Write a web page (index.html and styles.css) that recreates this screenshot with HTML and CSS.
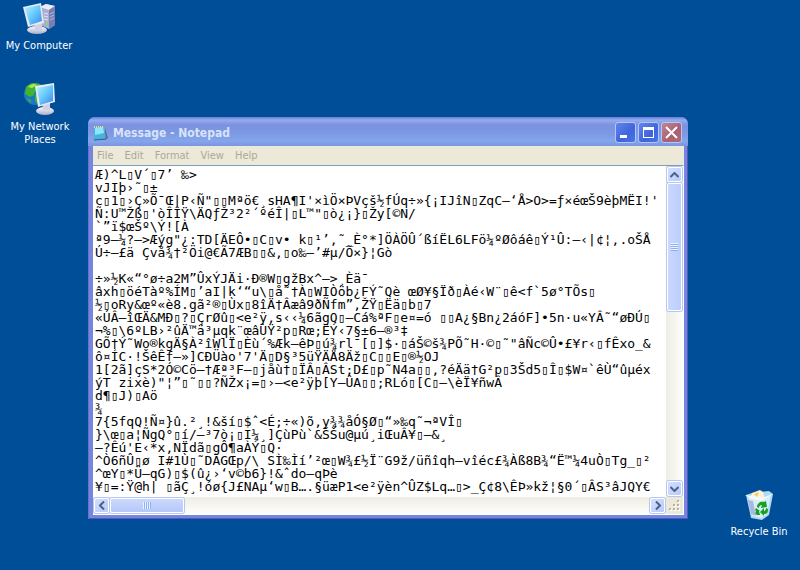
FILE: index.html
```
<!DOCTYPE html>
<html lang="en">
<head>
    <meta charset="UTF-8">
    <meta name="viewport" content="width=device-width, initial-scale=1.0">
    <title>Desktop</title>
    <link rel="stylesheet" href="styles.css">
</head>
<body>
    <!-- Desktop icons -->
    <a href="#computer" class="icon computer">
        <svg width="34" height="32" viewBox="0 0 34 32">
            <defs>
                <linearGradient id="screen" x1="0" y1="0" x2="1" y2="1">
                    <stop offset="0" stop-color="#b4f3ff"/>
                    <stop offset="0.5" stop-color="#66c8fa"/>
                    <stop offset="1" stop-color="#3f86ec"/>
                </linearGradient>
                <linearGradient id="base" x1="0" y1="0" x2="0" y2="1">
                    <stop offset="0" stop-color="#fff"/>
                    <stop offset="1" stop-color="#a9abc9"/>
                </linearGradient>
            </defs>
            <path d="M18 4l6-3 9 2v19l-6 4-9-4z" fill="#aaaed0"/>
            <path d="M18 4l6-3 9 2-6 4z" fill="#e9ebf8"/>
            <path d="M27 7l6-4v19l-6 4z" fill="#777eb0"/>
            <path d="M22 10l4 1M22 13l4 1M22 16l4 1" stroke="#e4e6f6"/>
            <path d="M28 11l4-2M28 14l4-2M28 17l4-2" stroke="#b4b9dc"/>
            <path d="M24 20l2 1v2l-2-1z" fill="#7cdc62"/>
            <ellipse cx="15" cy="27" rx="10" ry="4" fill="url(#base)"/>
            <path d="M12 20l8-1v8h-7z" fill="#cfd1e4"/>
            <path d="M1 4l18-4 3 20-16 4z" fill="#e8e9f2"/>
            <path d="M3 5l15-3 2 16-12 4z" fill="url(#screen)"/>
        </svg>
        <span>My Computer</span>
    </a>
    <a href="#network" class="icon network">
        <svg width="34" height="34" viewBox="0 0 34 34">
            <circle cx="12" cy="12" r="11" fill="#1878c8"/>
            <path d="M3 5c4-5 11-5 15-2l-3 5-3 1-1 4-4 2-5-3zM12 13l5-1 2 4-4 6-3-3zM3 16l5 2v3z" fill="#43b52c"/>
            <path d="M5 5c3-3 6-4 9-2l-5 3z" fill="#a9e75c"/>
            <ellipse cx="22" cy="29" rx="9" ry="4" fill="url(#base)"/>
            <path d="M19 21l8-1v8h-7z" fill="#cfd1e4"/>
            <path d="M12 4l19-3 1 19-17 5z" fill="#e8e9f2"/>
            <path d="M14 6l16-3v16l-13 4z" fill="url(#screen)"/>
        </svg>
        <span>My Network Places</span>
    </a>
    <a href="#recycle" class="icon recycle">
        <svg width="30" height="32" viewBox="0 0 30 32">
            <path d="M2 6l6-2 17-2 4 3-4 21-7 5-11-2z" fill="#b3d9f2"/>
            <path d="M4 7l14 4 9-6-4 20-6 4-9-2z" fill="#d9eefb"/>
            <path d="M8 4l8-3 3 2 2 7-9 1-5-3z" fill="#fff3d4"/>
            <path d="M10 5l5-2-2 5z" fill="#f4c76d"/>
            <path d="M1 6l5 3 11 3 12-7-11 4-9-2z" fill="#f4fbff"/>
            <path d="M4 11l3 14 5 2-3-15z" fill="#a6badf"/>
            <path d="M13 18c0-4 4-6 7-5l2-1 1 6-6 1 1-3c-2 0-3 1-3 3z" fill="#18a020"/>
            <path d="M22 19l2 1c0 4-1 5-4 5v2l-4-4 4-4v3c1 0 2-1 2-3z" fill="#18a020"/>
            <path d="M12 19l4 3h-1l1 4h-3c-2-1-2-2-1-4l-1-1z" fill="#18a020"/>
        </svg>
        <span>Recycle Bin</span>
    </a>

    <!-- Notepad -->
    <div class="window">
        <div class="titlebar">
            <svg class="app-icon" width="16" height="16" viewBox="0 0 16 16">
                <path d="M12 3l3 10-3 2z" fill="#5a6d78"/>
                <path d="M1 2l10-1 2 13-12 1z" fill="#47b2df"/>
                <path d="M2 3l8-1 1 6-9 2z" fill="#8ee6f5"/>
                <path d="M1 15l12-1" stroke="#2d5a88"/>
                <path d="M1 2h10" stroke="#e8d9a0" stroke-width="2" stroke-dasharray="1 1"/>
            </svg>
            <h1>Message - Notepad</h1>
            <button class="control" aria-label="Minimize">
                <svg width="19" height="19" viewBox="0 0 19 19"><path d="M4 12h7v3H4z" fill="#fff"/></svg>
            </button>
            <button class="control" aria-label="Maximize">
                <svg width="19" height="19" viewBox="0 0 19 19"><path d="M4 4h11v11H4zM5 7v7h9V7z" fill="#fff" fill-rule="evenodd"/></svg>
            </button>
            <button class="control close" aria-label="Close">
                <svg width="19" height="19" viewBox="0 0 19 19"><path d="M4 4l11 11M15 4L4 15" stroke="#fff" stroke-width="2"/></svg>
            </button>
        </div>
        <div class="menubar">
            <button>File</button>
            <button>Edit</button>
            <button>Format</button>
            <button>View</button>
            <button>Help</button>
        </div>
        <div class="editor">
            <textarea aria-label="Message" wrap="off" spellcheck="false">Æ)^L▯V´▯7’ ‰>
vJIþ›˜▯±
c▯1▯›Ç»Õ¯Œ|P‹Ñ"▯▯Mªö€¸sHA¶I'×ìÖ×ÞVçš½fÚq÷»{¡IJîN▯ZqC–‘Å&gt;O&gt;=ƒ×éœŠ9èþMËI!'
Ñ:U™Žß▯'òÎÎŸ\ÄQƒŽ³2²´ºéÎ|▯L™"▯ò¿¡}▯Žy[©N/
`”ï$œŠº\Ý![À
ª9–¼?–>Æýg"¿:TD[ÄEÔ•▯C▯v• k▯¹’,˜_È°*]ÖÀÖÛ´ßíËL6LFö¼ºØôáê▯Ý¹Û:–‹|¢¦,.oŠÅ
Ú÷–£ä Çvå¾†²Öi@€Ã7ÆB▯▯&amp;,▯o‰–’#µ/Õ×}¦Gò

÷»½K«“°ø÷a2M”ÛxÝJÄi·Ð®W▯gžBx^–>¸Èä¯
âxh▯öéTàº%ÍM▯’aI|k‘“u\▯å˜†À▯WIÒöb¿FÝ˜Qè œØ¥§Ïð▯Àé‹W¨▯ê&lt;f`5ø°TÕs▯
½▯oRy&amp;œº«è8.gã²®▯Ùx▯8îÄ†Âæâ9ðÑfm”,ŽŸ▯Ëä▯b▯7
«ÚÂ—îŒÄ&amp;MÐ▯?▯ÇrØû▯&lt;e²ÿ,s‹‹¼6ãgQ▯–Cá%ªF▯e¤=ó ▯▯A¿§Bn¿2áóF]•5n·u«YÂ˜“øÐÚ▯
¬%▯\6ºLB›²ûÄ™ä³µqk¨œâÙŸ²p▯Rœ;ËÝ‹7§±6—®³‡
GÕ†Ý˜Wo®kgÄ§À²îWlÏ▯Èù´%Æk–êÞ▯ú¾rl¯[▯]$·▯áŠ©š¾PÕ˜H·©▯˜"âÑc©Û•£¥r‹▯fÊxo_&amp;
ô¤ÍC·!ŠêÊf–»]CÐÜào'7'Ä▯D§³5üŸÄÅ8Äž▯C▯▯E▯®½OJ
1[2ã]çS*2Ó©Cö–†Æª³F–▯jåù†▯ÏÂ▯ÂSt;D£▯p˜N4a▯▯,?éÄä†G²p▯3Šd5▯Î▯$W¤`êÙ“ûµéx
ýT zixè)"¦”▯˜▯▯?ÑŽx¡=▯›–&lt;e²ÿþ[Y–ÛA▯▯;RLó▯[C▯–\èÏ¥ñwÂ
d¶▯J)▯Aö
¾
7{5fqQ!Ñ¤}û.²¸!&amp;ší▯$ˆ&lt;É;÷«)õ,y¾¾åÓ§Ø▯“»‰q˜¬ªVÎ▯
}\œ▯a¦ÑgQ°▯í/–³7ò¡▯I¼¸]ÇùPù`&amp;ŠŠu@µú¸iŒuÂ¥▯–&amp;¸
–?Êú'E‹*x,NÏdã▯gÔ¶aÀÝ▯Q·
^Ò6ñÛ▯ø I#1Ù▯˜DÀGŒp/\ SÌ‰Ìí’²œ▯W¾£½Ï¨G9ž/üñîqh—vîéc£¾Àß8B¾“Ë™¼4uÒ▯Tg_▯²
^œY▯*Ü–qG)▯$(û¿›‘v©b6}!&amp;ˆdo–qÞè
¥▯=:Ÿ@h| ▯ãÇ¸!óø{J£NAµ‘w▯B….§üæP1&lt;e²ÿèn^ÛZ$Lq…▯>_Ç¢8\ÊÞ»kž¦§0´▯ÂS³âJQY€</textarea>
            <div class="scrollbar vertical">
                <button class="arrow" aria-label="Scroll up">
                    <svg width="9" height="6" viewBox="0 0 9 6"><path d="M0.500 5l4-4 4 4"/></svg>
                </button>
                <div class="thumb"><i></i></div>
                <button class="arrow last" aria-label="Scroll down">
                    <svg width="9" height="6" viewBox="0 0 9 6"><path d="M0.500 1l4 4 4-4"/></svg>
                </button>
            </div>
            <div class="scrollbar horizontal">
                <button class="arrow" aria-label="Scroll left">
                    <svg width="6" height="9" viewBox="0 0 6 9"><path d="M5 0.500l-4 4 4 4"/></svg>
                </button>
                <div class="thumb"><i></i></div>
                <button class="arrow last" aria-label="Scroll right">
                    <svg width="6" height="9" viewBox="0 0 6 9"><path d="M1 0.500l4 4-4 4"/></svg>
                </button>
            </div>
            <div class="grip">
                <svg width="12" height="12" viewBox="0 0 12 12">
                    <path d="M9 1h2v2H9zM5 5h2v2H5zM9 5h2v2H9zM1 9h2v2H1zM5 9h2v2H5zM9 9h2v2H9z" fill="#fff"/>
                    <path d="M8 0h2v2H8zM4 4h2v2H4zM8 4h2v2H8zM0 8h2v2H0zM4 8h2v2H4zM8 8h2v2H8z" fill="#b8b4a3"/>
                </svg>
            </div>
        </div>
    </div>
</body>
</html>
```
FILE: styles.css
```
* {
    box-sizing: border-box;
}

body {
    margin: 0;
    min-height: 100vh;
    position: relative;
    overflow: hidden;
    background: #004e98;
    font-family: "DejaVu Sans Condensed", "DejaVu Sans", sans-serif;
    font-size: 11px;
}

button {
    margin: 0;
    padding: 0;
    border: 0;
    background: none;
    font: inherit;
}

svg {
    display: block;
}

/* Desktop icons */
.icon {
    position: absolute;
    width: 76px;
    display: flex;
    flex-direction: column;
    align-items: center;
    gap: 4px;
    color: #fff;
    line-height: 13px;
    text-align: center;
    text-decoration: none;
}

.computer {
    top: 3px;
    left: 1px;
}

.network {
    top: 82px;
    left: 2px;
}

.recycle {
    right: 3px;
    bottom: 32px;
}

/* Window */
.window {
    position: absolute;
    inset: 117px 112px 51px 88px;
    display: flex;
    flex-direction: column;
    padding: 0 4px 4px 5px;
    border-radius: 7px 7px 0 0;
    background: #7487dc;
    box-shadow: inset 1px 0 #6a6fd0, inset -1px -1px #5a55c0;
}

.titlebar {
    display: flex;
    align-items: center;
    gap: 2px;
    height: 29px;
    margin: 0 -4px 0 -5px;
    padding: 2px 6px 0 5px;
    border-radius: 7px 7px 0 0;
    background: linear-gradient(#6c7ad6, #92aeee 3px, #7b92e0 8px, #7d98e4 16px, #84a6ea 24px, #7b94e2);
}

.titlebar h1 {
    flex: 1;
    margin: 0 0 0 2px;
    color: #d8e4f8;
    font-size: 12px;
    font-weight: bold;
}

.control {
    width: 21px;
    height: 21px;
    border: 1px solid #b4c6f4;
    border-radius: 3px;
    background: linear-gradient(135deg, #6285ec, #3f64dc 60%, #4a74ea);
}

.close {
    background: linear-gradient(135deg, #c08494, #aa6070 60%, #b06a74);
}

.menubar {
    display: flex;
    gap: 11px;
    height: 19px;
    padding: 0 4px;
    background: #ece9d8;
}

.menubar button {
    color: #aca899;
}

/* Text area and its scrollbars */
.editor {
    flex: 1;
    min-height: 0;
    display: grid;
    grid-template-columns: 1fr 17px;
    grid-template-rows: 1fr 17px;
    border: 1px solid #7f9db9;
    border-width: 1px 1px 1px 0;
    border-color: #7f9db9 #fff #fff;
    background: #fff;
}

textarea {
    width: 100%;
    height: 100%;
    margin: 0;
    padding: 2px 0 0 2px;
    border: 0;
    outline: 0;
    resize: none;
    overflow: hidden;
    background: #fff;
    color: #000;
    font-family: "DejaVu Sans Mono", monospace;
    font-size: 13px;
    line-height: 13px;
    white-space: pre;
}

.scrollbar {
    display: flex;
    gap: 1px;
    padding: 1px;
}

.vertical {
    flex-direction: column;
    background: linear-gradient(to right, #eeede5, #fefefb);
}

.horizontal {
    background: linear-gradient(#eeede5, #fefefb);
}

.arrow,
.thumb {
    display: flex;
    align-items: center;
    justify-content: center;
    border: 1px solid #fff;
    border-radius: 2px;
    background: linear-gradient(135deg, #d2defe, #b9cbfa);
    box-shadow: 0 0 0 1px #b5c7f0;
}

.arrow {
    width: 15px;
    height: 15px;
}

.arrow path {
    fill: none;
    stroke: #4d6185;
    stroke-width: 2;
}

.last {
    margin-top: auto;
}

.horizontal .last {
    margin-top: 0;
    margin-left: auto;
}

.vertical .thumb {
    height: 39%;
    background: linear-gradient(to right, #cbd8fe, #bccdfb);
}

.horizontal .thumb {
    width: 13%;
    background: linear-gradient(#cbd8fe, #b6c8f8);
}

.thumb i {
    width: 7px;
    height: 8px;
    background: repeating-linear-gradient(#eef4fe 0 1px, #8cb0f8 1px 2px);
}

.horizontal .thumb i {
    width: 8px;
    height: 7px;
    background: repeating-linear-gradient(to right, #eef4fe 0 1px, #8cb0f8 1px 2px);
}

.grip {
    display: flex;
    align-items: flex-end;
    justify-content: flex-end;
    padding: 2px;
    background: #ece9d8;
}
```
